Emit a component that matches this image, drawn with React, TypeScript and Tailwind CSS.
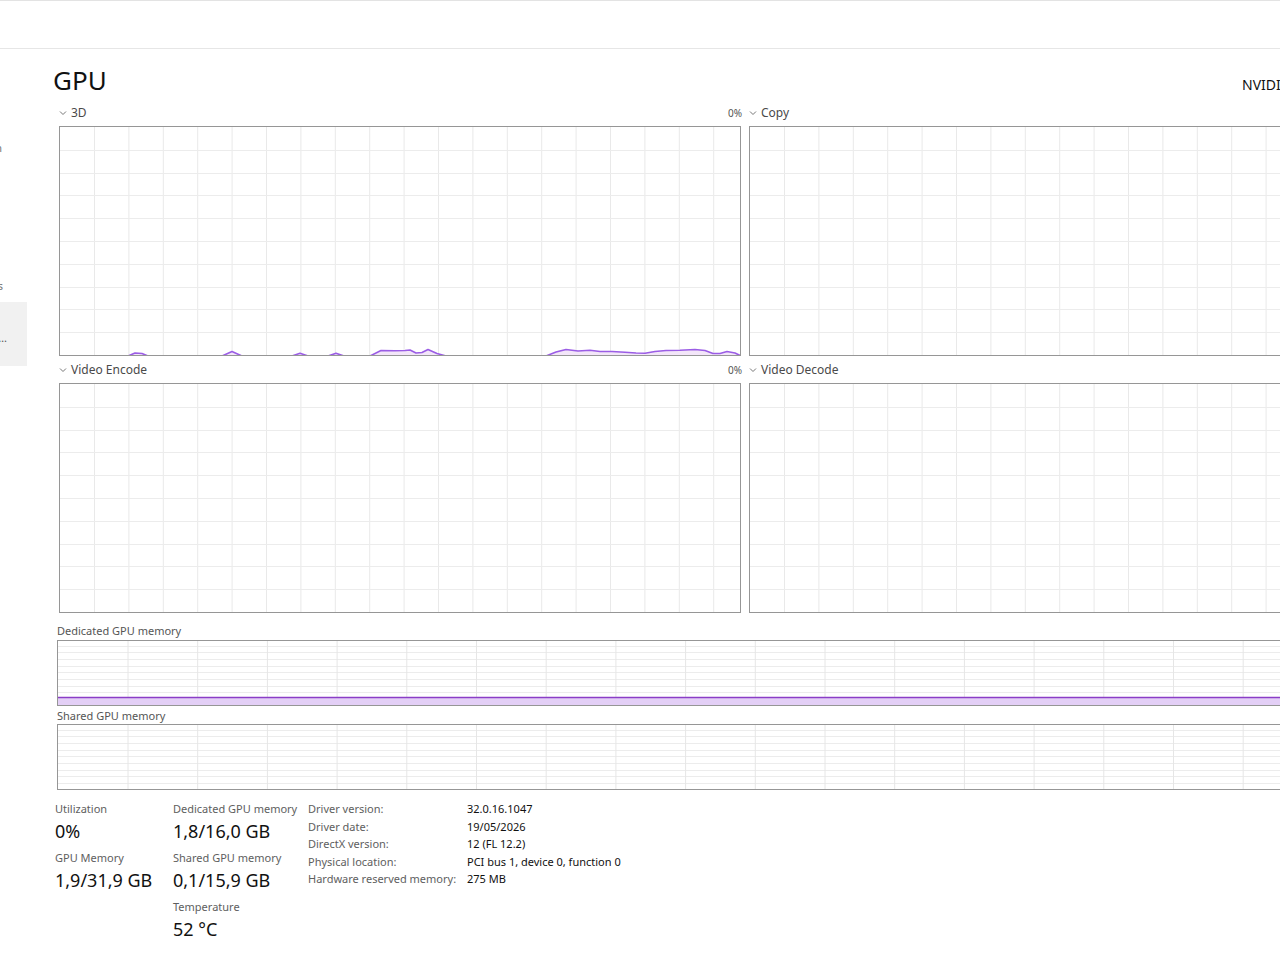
const FONT = { fontFamily: '"Noto Sans", "Open Sans", sans-serif' };

const raw3d: [number, number][] = [
  [58, 356], [128, 356], [135, 353], [142, 353.5], [148, 356], [222, 356], [232, 351.5], [242, 356],
  [292, 356], [300, 353.2], [308, 356], [328, 356], [336, 353.3], [344, 356], [370, 356], [381, 350.5],
  [395, 350.8], [405, 350.5], [410, 350], [416, 353], [422, 352.5], [428, 349.5], [437, 353.5], [446, 356],
  [546, 356], [556, 352], [566, 349.5], [578, 351], [590, 350.2], [600, 351.5], [612, 351.5], [625, 352.3],
  [636, 353], [645, 353.3], [655, 351.5], [666, 350.5], [680, 350.2], [695, 349.5], [705, 350.5],
  [713, 353.5], [720, 353.5], [727, 351.5], [735, 353], [741, 356],
];

function Chevron() {
  return (
    <svg width="8" height="6" viewBox="0 0 8 6" className="shrink-0">
      <path d="M1 1.5 L4 4.5 L7 1.5" fill="none" stroke="#777" strokeWidth="1" />
    </svg>
  );
}

function EngineGrid({ line }: { line?: [number, number][] }) {
  const w = 680;
  const h = 228;
  const pts = line ? line.map(([x, y]) => `${x - 60},${y - 127}`).join(" ") : "";
  return (
    <svg width={w} height={h} className="block overflow-hidden">
      {Array.from({ length: 20 }).map((_, i) => (
        <line key={"v" + i} x1={34.5 + i * 34.4} x2={34.5 + i * 34.4} y1={0} y2={h} stroke="#e9e9e9" strokeWidth="1" />
      ))}
      {Array.from({ length: 9 }).map((_, i) => (
        <line key={"h" + i} x1={0} x2={w} y1={Math.round(22.8 * (i + 1)) + 0.5} y2={Math.round(22.8 * (i + 1)) + 0.5} stroke="#ececec" strokeWidth="1" />
      ))}
      {line && (
        <>
          <polygon points={`0,${h + 4} ${pts} ${w},${h + 4}`} fill="#f3e6f9" />
          <polyline points={pts} fill="none" stroke="#9b5de5" strokeWidth="1.6" strokeLinejoin="round" />
        </>
      )}
    </svg>
  );
}

function EnginePanel({ name, pct, line }: { name: string; pct?: string; line?: [number, number][] }) {
  return (
    <div className="w-[684px] shrink-0">
      <div className="flex h-[18px] items-center justify-between">
        <div className="flex items-center gap-[4px]">
          <Chevron />
          <span className="text-[12px] text-[#4a4a4a]">{name}</span>
        </div>
        {pct && <span className="mr-[1px] text-[10px] text-[#555]">{pct}</span>}
      </div>
      <div className="mt-[4px] w-[682px] border border-[#969696]">
        <EngineGrid line={line} />
      </div>
    </div>
  );
}

function MemGrid({ filled }: { filled?: boolean }) {
  const w = 1400;
  const h = 64;
  return (
    <svg width={w} height={h} className="block">
      {Array.from({ length: 9 }).map((_, i) => (
        <line key={"h" + i} x1={0} x2={w} y1={Math.round(4.7 + i * 6.67) + 0.5} y2={Math.round(4.7 + i * 6.67) + 0.5} stroke="#ececec" strokeWidth="1" />
      ))}
      {Array.from({ length: 20 }).map((_, i) => (
        <line key={"v" + i} x1={70 + i * 69.7} x2={70 + i * 69.7} y1={0} y2={h} stroke="#e6e6e6" strokeWidth="1" />
      ))}
      {filled && (
        <>
          <rect x={0} y={56} width={w} height={8} fill="#e3cff6" />
          <line x1={0} x2={w} y1={56.5} y2={56.5} stroke="#8a3dc7" strokeWidth="1.5" />
        </>
      )}
    </svg>
  );
}

function Stat({ label, value, first }: { label: string; value: string; first?: boolean }) {
  return (
    <div className={first ? "" : "mt-[7px]"}>
      <div className="h-[16px] text-[11px] leading-[16px] text-[#5e5e5e]">{label}</div>
      <div className="mt-[2px] h-[24px] text-[18px] leading-[24px] text-[#111]">{value}</div>
    </div>
  );
}

const details: [string, string][] = [
  ["Driver version:", "32.0.16.1047"],
  ["Driver date:", "19/05/2026"],
  ["DirectX version:", "12 (FL 12.2)"],
  ["Physical location:", "PCI bus 1, device 0, function 0"],
  ["Hardware reserved memory:", "275 MB"],
];

export default function App() {
  return (
    <div className="h-[960px] w-[1280px] overflow-hidden bg-white" style={FONT}>
      <div className="h-[49px] border-t border-b border-t-[#e3e3e3] border-b-[#e6e6e6] bg-white" />
      <div className="flex">
        <div className="w-[27px] shrink-0 overflow-hidden">
          <div className="-ml-[200px] w-[227px] text-[11px] text-[#777]">
            <div className="mt-[89px] h-[20px] pr-[25px] text-right leading-[20px]">n</div>
            <div className="mt-[118px] h-[20px] pr-[24px] text-right leading-[20px]">s</div>
            <div className="mt-[6px] h-[64px] bg-[#f1f1f1] pr-[20px] pt-[26px] text-right leading-[20px] text-[#555]">…</div>
          </div>
        </div>
        <div className="w-[1500px] shrink-0 pl-[26px]">
          <div className="flex items-end pt-[14px]">
            <div className="w-[1189px] shrink-0 text-[26px] leading-[34px] text-[#111]">GPU</div>
            <div className="mb-[2px] whitespace-nowrap text-[14px] leading-[20px] text-[#111]">NVIDIA GeForce RTX 4070 Ti SUPER</div>
          </div>

          <div className="ml-[6px] mt-[7px] flex gap-[6px]">
            <EnginePanel name="3D" pct="0%" line={raw3d} />
            <EnginePanel name="Copy" />
          </div>
          <div className="ml-[6px] mt-[5px] flex gap-[6px]">
            <EnginePanel name="Video Encode" pct="0%" />
            <EnginePanel name="Video Decode" />
          </div>

          <div className="ml-[4px] mt-[11px]">
            <div className="h-[14px] text-[11px] leading-[14px] text-[#555]">Dedicated GPU memory</div>
            <div className="mt-[2px] border border-[#969696]">
              <MemGrid filled />
            </div>
            <div className="mt-[3px] h-[14px] text-[11px] leading-[14px] text-[#555]">Shared GPU memory</div>
            <div className="mt-[1px] border border-[#969696]">
              <MemGrid />
            </div>
          </div>

          <div className="ml-[2px] mt-[11px] flex">
            <div className="w-[118px] shrink-0">
              <Stat first label="Utilization" value="0%" />
              <Stat label="GPU Memory" value="1,9/31,9 GB" />
            </div>
            <div className="w-[135px] shrink-0">
              <Stat first label="Dedicated GPU memory" value="1,8/16,0 GB" />
              <Stat label="Shared GPU memory" value="0,1/15,9 GB" />
              <Stat label="Temperature" value="52 °C" />
            </div>
            <div className="-mt-[1px] text-[11px] leading-[17.5px]">
              {details.map(([k, v]) => (
                <div key={k} className="flex">
                  <div className="w-[159px] shrink-0 text-[#5e5e5e]">{k}</div>
                  <div className="text-[#111]">{v}</div>
                </div>
              ))}
            </div>
          </div>
        </div>
      </div>
    </div>
  );
}
